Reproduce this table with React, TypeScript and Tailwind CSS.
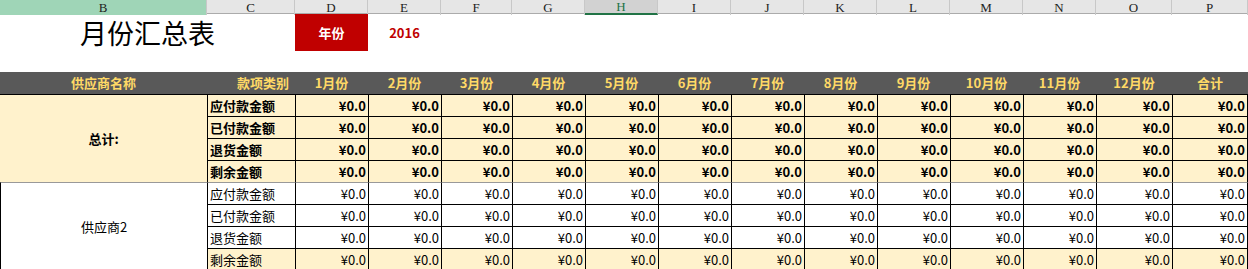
import React from 'react';

const GRID = 'grid grid-cols-[207px_88px_73px_73px_71px_73px_73px_73px_73px_73px_73px_73px_73px_76px_76px]';

const COL_LETTERS = ['B', 'C', 'D', 'E', 'F', 'G', 'H', 'I', 'J', 'K', 'L', 'M', 'N', 'O', 'P'];
const MONTHS = ['1月份', '2月份', '3月份', '4月份', '5月份', '6月份', '7月份', '8月份', '9月份', '10月份', '11月份', '12月份', '合计'];
const CATEGORIES = ['应付款金额', '已付款金额', '退货金额', '剩余金额'];

const FONT = "font-['Noto_Sans_CJK_SC',sans-serif]";

const ColumnBar: React.FC = () => (
  <div className={`${GRID} h-[14px] bg-[#e6e6e6] border-b border-[#ababab]`}>
    {COL_LETTERS.map(letter => {
      const isB = letter === 'B';
      const isH = letter === 'H';
      return (
        <div
          key={letter}
          className={`flex items-center justify-center border-r border-[#c8c8c8] font-['Liberation_Serif',serif] text-[13px] leading-none ${
            isB ? 'bg-[#9fd5b7] text-[#222]' : isH ? 'bg-[#d2d2d2] text-[#217346] border-b-2 border-b-[#217346]' : 'text-[#222]'
          }`}
        >
          {letter}
        </div>
      );
    })}
  </div>
);

interface GroupProps {
  name: string;
  total?: boolean;
}

const Group: React.FC<GroupProps> = ({ name, total }) => {
  const topBorder = total ? 'border-t-black' : 'border-t-[#999]';
  return (
    <div className={`${GRID} auto-rows-[22px] ${FONT} text-[13px] text-black ${total ? 'font-bold' : ''}`}>
      <div
        className={`row-span-4 flex items-center justify-center border-t ${topBorder} ${
          total ? 'bg-[#fff2cc] border-[#fff2cc]' : 'bg-white border-l border-l-black'
        }`}
      >
        {name}
      </div>
      {CATEGORIES.map((cat, r) => {
        const cream = total || r === 3;
        const bt = r === 0 ? topBorder : 'border-t-black';
        return (
          <React.Fragment key={cat}>
            <div className={`flex items-center pl-[2px] border-l border-t border-l-black ${bt} ${cream ? 'bg-[#fff2cc]' : 'bg-white'}`}>
              {cat}
            </div>
            {MONTHS.map((m, i) => (
              <div
                key={m}
                className={`flex items-center justify-end pr-[2px] border-l border-t border-l-black ${bt} ${
                  i === MONTHS.length - 1 ? 'border-r border-r-black' : ''
                } ${cream ? 'bg-[#fff2cc]' : 'bg-white'}`}
              >
                ¥0.0
              </div>
            ))}
          </React.Fragment>
        );
      })}
    </div>
  );
};

export default function App() {
  return (
    <div className="w-[1248px] h-[269px] overflow-hidden bg-white">
      <ColumnBar />

      {/* title + year */}
      <div className={`${GRID} h-[37px] ${FONT}`}>
        <div className="col-span-2 flex items-center justify-center text-[27px] text-black leading-none">月份汇总表</div>
        <div className="flex items-center justify-center bg-[#c00000] text-white font-bold text-[13px]">年份</div>
        <div className="flex items-center justify-center text-[#c00000] font-bold text-[13px]">2016</div>
      </div>
      <div className="h-[21px]" />

      {/* table header */}
      <div className={`${GRID} h-[22px] bg-[#595959] ${FONT} text-[13px] font-bold text-[#ffd966]`}>
        <div className="flex items-center justify-center">供应商名称</div>
        <div className="flex items-center justify-end pr-[6px]">款项类别</div>
        {MONTHS.map(m => (
          <div key={m} className="flex items-center justify-center">{m}</div>
        ))}
      </div>

      <Group name="总计:" total />
      <Group name="供应商2" />
    </div>
  );
}
